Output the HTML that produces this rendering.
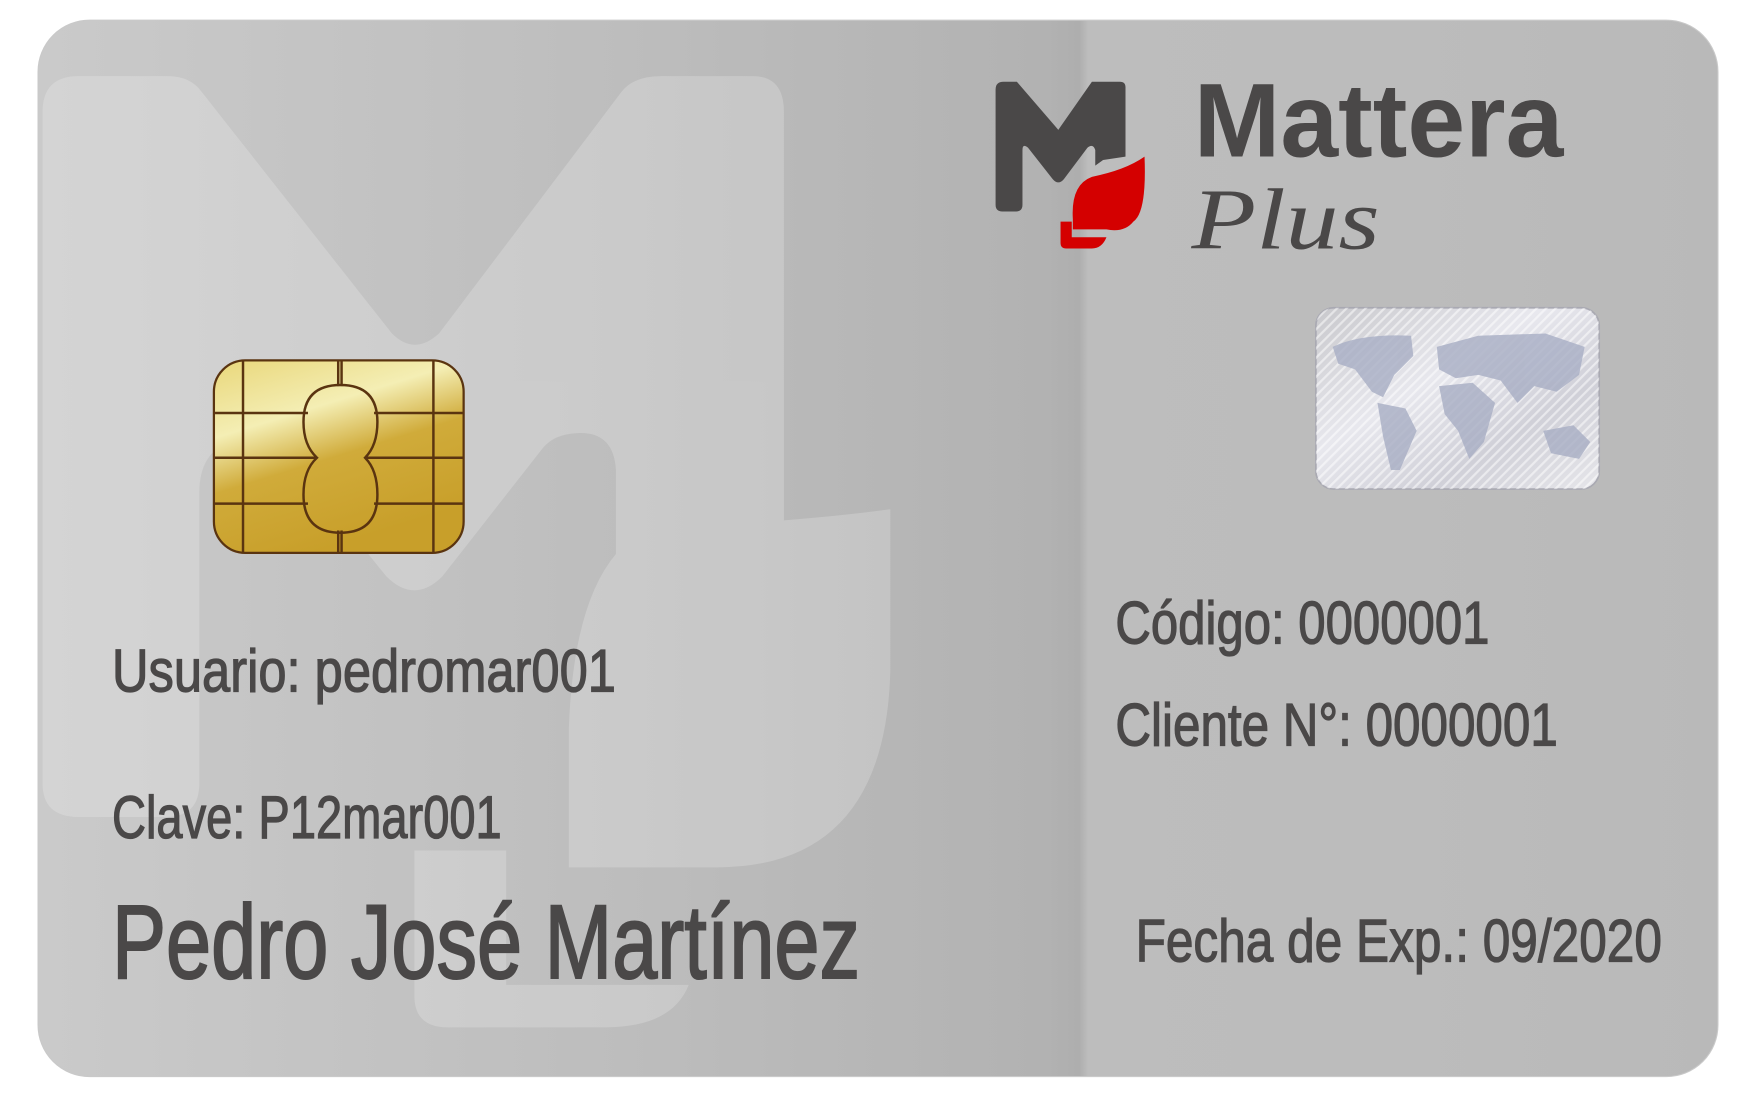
<!DOCTYPE html>
<html><head><meta charset="utf-8"><style>
html,body{margin:0;padding:0;background:#fff;width:1756px;height:1099px;overflow:hidden}
svg{display:block}
.t{font-family:"Liberation Sans Narrow","Liberation Sans",sans-serif;fill:#4a4848;stroke:#4a4848;stroke-width:1.1}
</style></head><body>
<svg width="1756" height="1099" viewBox="0 0 1568 982" preserveAspectRatio="none" xmlns="http://www.w3.org/2000/svg">
<defs>
<linearGradient id="bg" x1="0" y1="0" x2="1" y2="0">
<stop offset="0" stop-color="#cacaca"/>
<stop offset="0.35" stop-color="#bdbdbd"/>
<stop offset="0.6" stop-color="#b2b2b2"/>
<stop offset="0.62" stop-color="#aeaeae"/>
<stop offset="0.625" stop-color="#bdbdbd"/>
<stop offset="0.8" stop-color="#bcbcbc"/>
<stop offset="1" stop-color="#b9b9b9"/>
</linearGradient>
<linearGradient id="gold" x1="0" y1="0" x2="0.4" y2="1">
<stop offset="0" stop-color="#e9d77a"/>
<stop offset="0.35" stop-color="#f4eeb4"/>
<stop offset="0.6" stop-color="#d0ab3a"/>
<stop offset="1" stop-color="#c89f2a"/>
</linearGradient>
<linearGradient id="holo" x1="0" y1="0" x2="1" y2="1">
<stop offset="0" stop-color="#c8c8cc"/>
<stop offset="0.4" stop-color="#e8e8ee"/>
<stop offset="0.7" stop-color="#d0d0d8"/>
<stop offset="1" stop-color="#e6e6ea"/>
</linearGradient>
<pattern id="str" width="6" height="6" patternUnits="userSpaceOnUse" patternTransform="rotate(-45)">
<rect width="6" height="2" fill="#ffffff" opacity="0.5"/>
</pattern>
</defs>
<rect x="34" y="18" width="1500" height="944" rx="46" fill="url(#bg)" stroke="#c9c9c9" stroke-width="1"/>
<g fill="#ffffff" opacity="0.2">
<path d="M38,100 Q38,68 70,68 L150,68 Q170,68 180,82 L350,298 Q370,318 392,298 L555,82 Q566,68 590,68 L672,68 Q700,68 700,100 L700,465 L550,495 L550,420 Q548,385 515,387 Q495,388 485,400 L395,515 Q370,540 345,515 L260,410 Q240,385 205,395 Q178,405 178,440 L178,700 Q178,730 148,730 L70,730 Q38,730 38,700 Z"/>
<path d="M550,495 Q600,465 700,465 Q760,460 795,455 L795,600 Q790,775 640,775 L508,775 L508,650 Q512,540 550,495 Z"/>
<path d="M370,760 L452,760 L452,880 L615,880 Q600,918 540,918 L400,918 Q370,918 370,890 Z"/>
</g>
<path fill="#4a4848" d="M889,80 Q889,73 896,73 L908,73 L945,116 L975,73 L1000,73 Q1005,73 1005,78 L1005,140 L985,143 L978,148 L978,134 Q976,128 971,132 L950,160 Q945,166 940,160 L918,132 Q913,128 913,134 L913,183 Q913,189 907,189 L895,189 Q889,189 889,183 Z"/>
<path fill="#d40000" d="M958,196 Q956,165 975,158 Q1005,152 1022,140 Q1024,190 1012,198 Q1004,208 988,205 L958,205 Z M947,198 L957,198 L957,212 L988,212 Q984,222 975,222 L952,222 Q947,222 947,217 Z"/>
<text x="1066" y="140" font-family="Liberation Sans" font-weight="bold" font-size="94" fill="#4a4848" textLength="330" lengthAdjust="spacingAndGlyphs">Mattera</text>
<text x="1064" y="222" font-family="Liberation Serif" font-style="italic" font-size="78" fill="#4a4848" textLength="168" lengthAdjust="spacingAndGlyphs">Plus</text>
<rect x="191" y="322" width="223" height="172" rx="28" fill="url(#gold)" stroke="#5a3410" stroke-width="2"/>
<g stroke="#5a3410" stroke-width="2.2" fill="none">
<line x1="217" y1="322" x2="217" y2="494"/><line x1="387" y1="322" x2="387" y2="494"/>
<line x1="302" y1="322" x2="302" y2="345"/><line x1="305" y1="322" x2="305" y2="345"/>
<line x1="302" y1="474" x2="302" y2="494"/><line x1="305" y1="474" x2="305" y2="494"/>
<line x1="192" y1="369" x2="275" y2="369"/><line x1="334" y1="369" x2="413" y2="369"/>
<line x1="192" y1="409" x2="283" y2="409"/><line x1="326" y1="409" x2="413" y2="409"/>
<line x1="192" y1="450" x2="275" y2="450"/><line x1="334" y1="450" x2="413" y2="450"/>
<path d="M283,409 Q271,398 271,377 Q271,344 304,344 Q337,344 337,377 Q337,398 326,409 Q337,420 337,442 Q337,476 304,476 Q271,476 271,442 Q271,420 283,409 Z"/>
</g>
<rect x="1175" y="275" width="253" height="162" rx="16" fill="url(#holo)" stroke="#a9a9b2" stroke-width="1.5"/>
<rect x="1175" y="275" width="253" height="162" rx="16" fill="url(#str)"/>
<g fill="#a8aec4" opacity="0.8">
<path d="M1190,310 Q1215,298 1260,300 L1262,318 L1245,335 L1235,355 L1225,350 L1210,330 L1195,325 Z"/>
<path d="M1230,360 L1255,365 L1265,385 L1250,420 L1242,420 L1235,390 Z"/>
<path d="M1283,310 L1320,300 L1380,298 L1415,310 L1410,335 L1390,350 L1370,345 L1355,360 L1340,340 L1320,335 L1300,338 L1285,330 Z"/>
<path d="M1285,345 L1315,342 L1335,360 L1325,395 L1312,410 L1302,385 L1290,370 Z"/>
<path d="M1378,385 L1405,380 L1420,395 L1410,410 L1385,405 Z"/>
</g>
<text class="t" x="100" y="618" font-size="54" textLength="450" lengthAdjust="spacingAndGlyphs">Usuario: pedromar001</text>
<text class="t" x="100" y="749" font-size="54" textLength="348" lengthAdjust="spacingAndGlyphs">Clave: P12mar001</text>
<text class="t" x="100" y="874" font-size="94" textLength="668" lengthAdjust="spacingAndGlyphs" style="stroke-width:1.8">Pedro José Martínez</text>
<text class="t" x="996" y="575" font-size="54" textLength="334" lengthAdjust="spacingAndGlyphs">Código: 0000001</text>
<text class="t" x="996" y="666" font-size="54" textLength="395" lengthAdjust="spacingAndGlyphs">Cliente N°: 0000001</text>
<text class="t" x="1014" y="859" font-size="54" textLength="470" lengthAdjust="spacingAndGlyphs">Fecha de Exp.: 09/2020</text>
</svg>
</body></html>
